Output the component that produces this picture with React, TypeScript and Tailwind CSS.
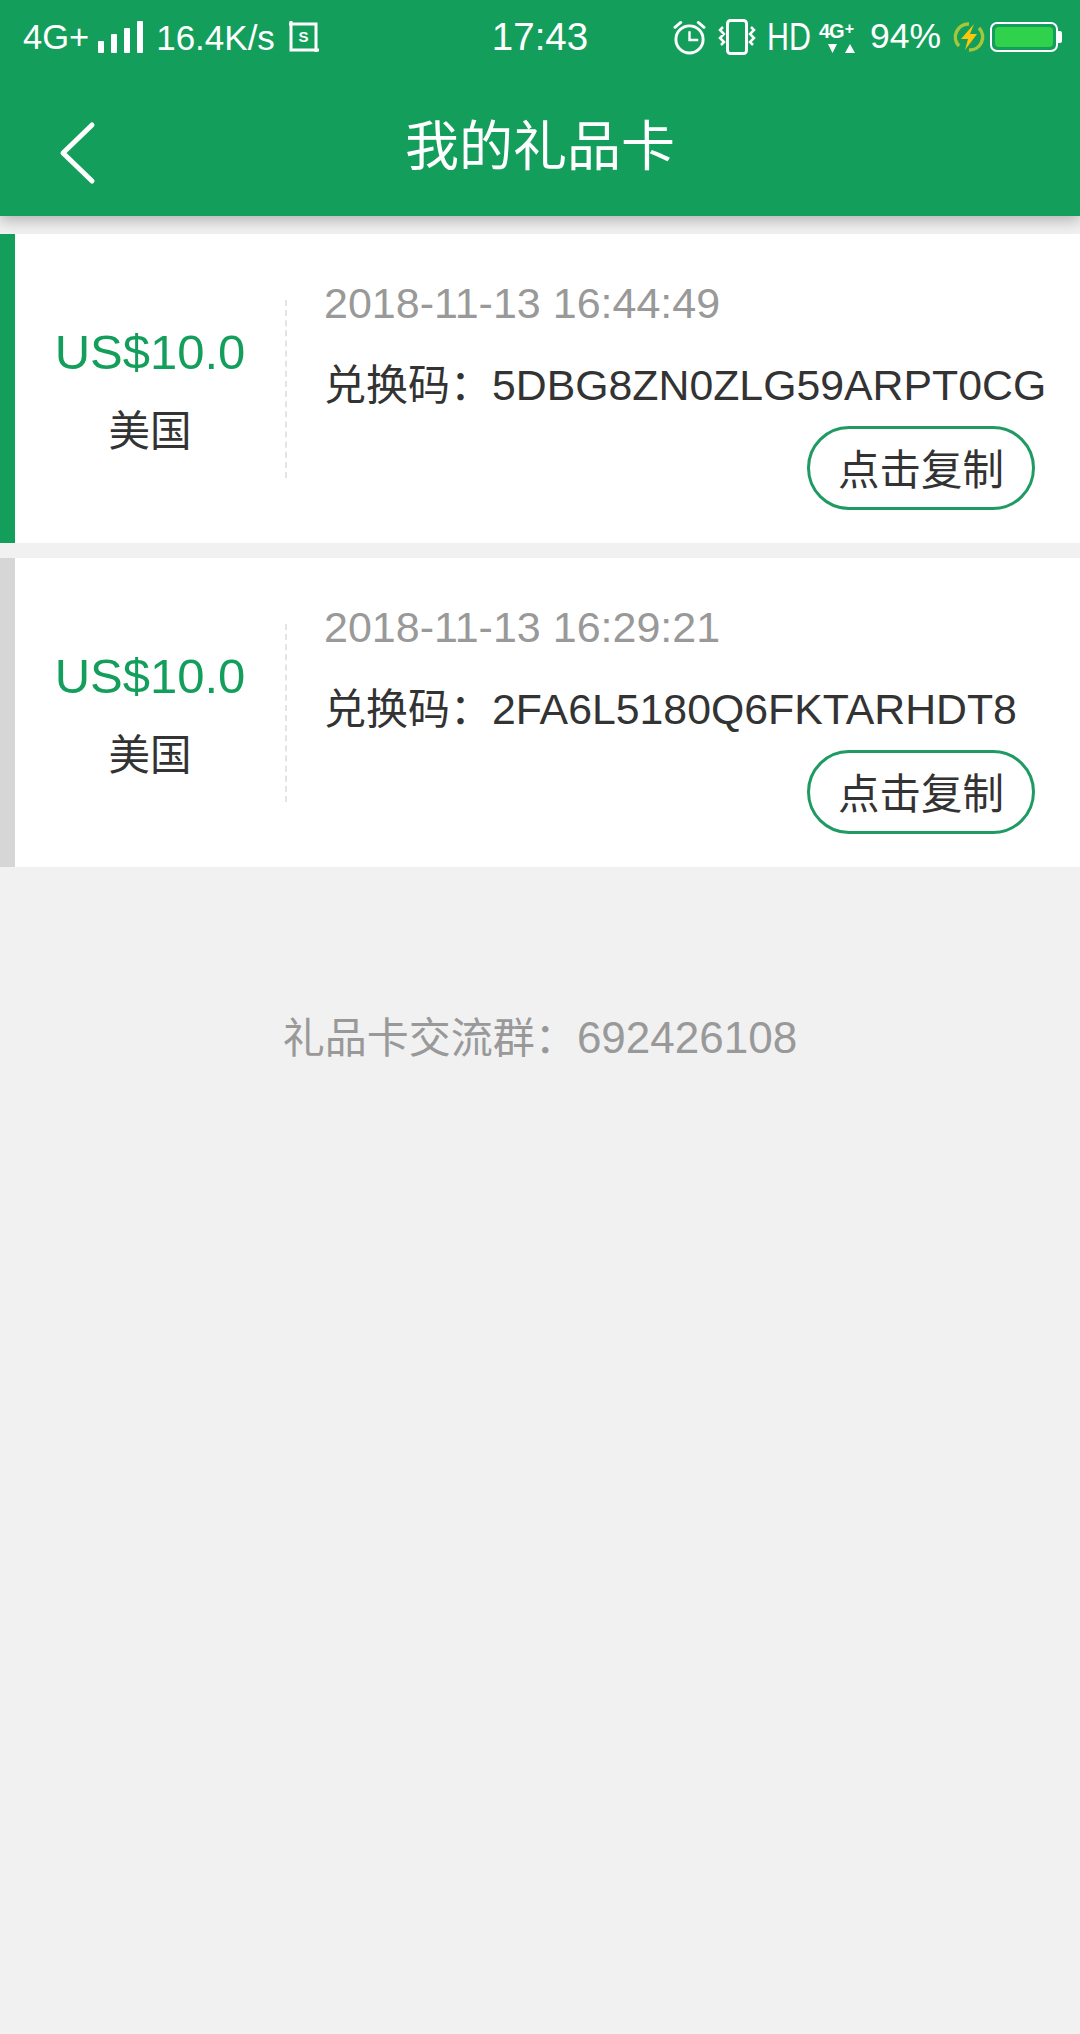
function Signal() {
  return (
    <svg width="47" height="33" viewBox="0 0 47 33" className="ml-[8px]" fill="white">
      <rect x="1" y="20" width="6" height="12" rx="1" />
      <rect x="14" y="13" width="6" height="19" rx="1" />
      <rect x="27" y="7" width="6" height="25" rx="1" />
      <rect x="40" y="0" width="6" height="32" rx="1" />
    </svg>
  )
}

function ScreenshotIcon() {
  return (
    <svg width="31" height="32" viewBox="0 0 31 32" className="ml-[14px]" fill="none" stroke="white">
      <path d="M2 0v29h28M0 3h27v28" strokeWidth="3" />
      <text x="14.500" y="21" textAnchor="middle" fontSize="15" fontWeight="700" fill="white" stroke="none">S</text>
    </svg>
  )
}

function AlarmIcon() {
  return (
    <svg width="33" height="36" viewBox="0 0 34 36" fill="none" stroke="white" strokeWidth="3">
      <circle cx="17" cy="20.500" r="14" />
      <path d="M17 12v9h9" strokeWidth="2.500" />
      <path d="M2 8l6-5M32 8l-6-5" strokeLinecap="round" />
    </svg>
  )
}

function VibrateIcon() {
  return (
    <svg width="38" height="36" viewBox="0 0 38 36" fill="none" stroke="white" strokeWidth="3" className="ml-[12px]">
      <rect x="9.500" y="1.500" width="19" height="33" rx="3" />
      <path d="M5 8l-3 3 4 4-4 4 4 4-3 3M33 8l3 3-4 4 4 4-4 4 3 3" strokeWidth="2.500" />
    </svg>
  )
}

function NetIcon() {
  return (
    <div className="ml-[10px] flex w-[38px] flex-col items-start">
      <div className="flex h-[21px] items-start text-[20px] leading-[21px] font-bold tracking-[-1px]">
        4G<span className="ml-[1px] text-[16px] leading-[15px]">+</span>
      </div>
      <svg width="30" height="11" viewBox="0 0 30 11" fill="white" className="ml-[9px] mt-[1px]">
        <path d="M0 1h9l-4.500 9zM22 1l5 9h-10z" />
      </svg>
    </div>
  )
}

function ChargeIcon() {
  return (
    <svg width="32" height="32" viewBox="0 0 32 32" fill="none" className="ml-[12px]">
      <path d="M6 25A13 13 0 0 1 16 3M26 7a13 13 0 0 1-10 22" stroke="#a8c63a" strokeWidth="3.500" />
      <path d="M21 3L8 18h7l-3 11 12-16h-7z" fill="#fbc60c" />
    </svg>
  )
}

function Battery() {
  return (
    <div className="ml-[5px] flex items-center">
      <div className="flex h-[30px] w-[68px] rounded-[7px] border-2 border-white p-[3px]">
        <div className="flex-1 rounded-[4px] bg-[#2fd24a]" />
      </div>
      <div className="h-[12px] w-[4px] rounded-r-[2px] bg-white" />
    </div>
  )
}

function StatusBar() {
  return (
    <div className="grid h-[72px] grid-cols-[1fr_auto_1fr] items-center px-[18px] pt-[2px] text-white">
      <div className="flex items-center pl-[5px] text-[34.500px] leading-none">
        <span>4G+</span>
        <Signal />
        <span className="ml-[12px] text-[35px]">16.4K/s</span>
        <ScreenshotIcon />
      </div>
      <div className="text-[38.500px] leading-none">17:43</div>
      <div className="flex items-center justify-end">
        <AlarmIcon />
        <VibrateIcon />
        <span className="ml-[11px] w-[42px] origin-left scale-x-[0.8] text-[38px] leading-none">HD</span>
        <NetIcon />
        <span className="ml-[13px] text-[35.500px] leading-none">94%</span>
        <ChargeIcon />
        <Battery />
      </div>
    </div>
  )
}

function Header() {
  return (
    <header className="relative z-10 h-[216px] bg-[#139f5b] shadow-[0_4px_14px_rgba(0,0,0,0.28)]">
      <StatusBar />
      <div className="grid h-[144px] grid-cols-[1fr_auto_1fr] items-center">
        <div className="pl-[58px] pt-[18px]">
          <svg width="40" height="64" viewBox="0 0 40 64" fill="none" stroke="white" strokeWidth="5" strokeLinecap="round" strokeLinejoin="round">
            <path d="M34 4L5 32l29 28" />
          </svg>
        </div>
        <h1 className="pt-[6px] text-[54px] leading-none font-normal text-white">我的礼品卡</h1>
        <div />
      </div>
    </header>
  )
}

type Card = { time: string; code: string; accent: string }

const cards: Card[] = [
  { time: '2018-11-13 16:44:49', code: '5DBG8ZN0ZLG59ARPT0CG', accent: 'bg-[#139f5b]' },
  { time: '2018-11-13 16:29:21', code: '2FA6L5180Q6FKTARHDT8', accent: 'bg-[#d6d6d6]' },
]

function GiftCard({ card }: { card: Card }) {
  return (
    <div className="flex h-[309px] bg-white">
      <div className={`w-[15px] ${card.accent}`} />
      <div className="flex h-full w-[270px] shrink-0 flex-col items-center pt-[88px]">
        <div className="text-[49px] leading-[60px] text-[#139f5b]">US$10.0</div>
        <div className="mt-[26px] text-[41.500px] leading-[48px] text-[#333]">美国</div>
      </div>
      <div className="mt-[66px] h-[178px] border-l-2 border-dashed border-[#e4e4e4]" />
      <div className="flex min-w-0 flex-1 flex-col pl-[37px] pt-[44px]">
        <div className="text-[43px] leading-[50px] whitespace-nowrap text-[#999]">{card.time}</div>
        <div className="mt-[32px] text-[42px] leading-[50px] whitespace-nowrap text-[#333]">
          兑换码：<span className="text-[42.800px]">{card.code}</span>
        </div>
        <div className="mt-[15px] flex justify-end pr-[45px]">
          <button type="button" className="flex h-[84px] w-[228px] items-center justify-center rounded-full border-[3px] border-[#1f9a63] pt-[7px] text-[41.500px] text-[#333]">
            点击复制
          </button>
        </div>
      </div>
    </div>
  )
}

export default function App() {
  return (
    <div className="min-h-[2034px] bg-[#f1f1f1] font-['Liberation_Sans','Noto_Sans_CJK_SC',sans-serif]">
      <Header />
      <main className="flex flex-col gap-[15px] pt-[18px]">
        {cards.map((c) => (
          <GiftCard key={c.code} card={c} />
        ))}
      </main>
      <p className="mt-[146px] text-center text-[42px] leading-[50px] text-[#999]">
        礼品卡交流群：<span className="text-[44px]">692426108</span>
      </p>
    </div>
  )
}
